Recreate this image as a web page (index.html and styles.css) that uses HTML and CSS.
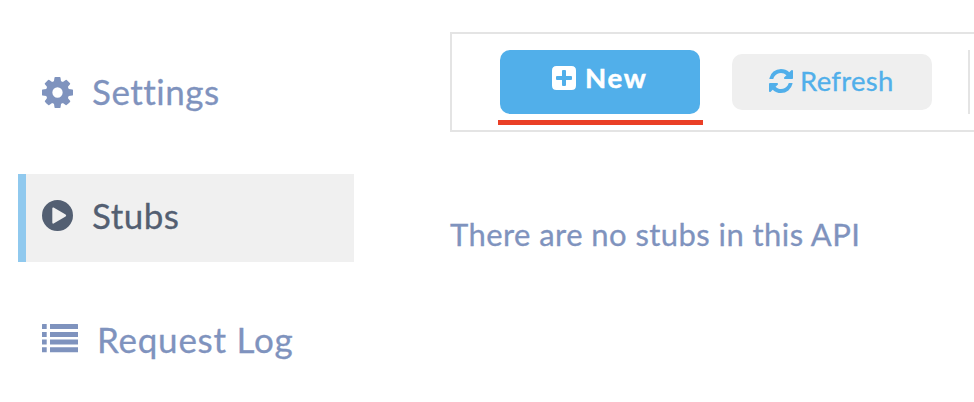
FILE: index.html
```html
<!DOCTYPE html>
<html lang="en">
<head>
<meta charset="utf-8">
<title>Stubs</title>
<link rel="stylesheet" href="styles.css">
</head>
<body>
<div class="layout">
  <nav class="sidebar">
    <a class="item">
      <svg class="icon gear" viewBox="0 128 1536 1536"><path d="M1024 896q0-106-75-181t-181-75-181 75-75 181 75 181 181 75 181-75 75-181zm512-109v222q0 12-8 23t-20 13l-185 28q-19 54-39 91 35 50 107 138 10 12 10 25t-9 23q-27 37-99 108t-94 71q-12 0-26-9l-138-108q-44 23-91 38-16 136-29 186-7 28-36 28h-222q-14 0-24.5-8.5t-11.5-21.5l-28-184q-49-16-90-37l-141 107q-10 9-25 9-14 0-25-11-126-114-165-168-7-10-7-23 0-12 8-23 15-21 51-66.5t54-70.5q-27-50-41-99l-183-27q-13-2-21-12.5t-8-23.5v-222q0-12 8-23t19-13l186-28q14-46 39-92-40-57-107-138-10-12-10-24 0-10 9-23 26-36 98.5-107.5t94.5-71.5q13 0 26 10l138 107q44-23 91-38 16-136 29-186 7-28 36-28h222q14 0 24.5 8.5t11.5 21.5l28 184q49 16 90 37l142-107q9-9 24-9 13 0 25 10 129 119 165 170 7 8 7 22 0 12-8 23-15 21-51 66.5t-54 70.5q26 50 41 98l183 28q13 2 21 12.5t8 23.5z"/></svg>
      <span class="label settings">Settings</span>
    </a>
    <a class="item active">
      <svg class="icon" viewBox="0 0 31 31"><path fill-rule="evenodd" d="M15.5 0a15.5 15.5 0 1 1 0 31a15.5 15.5 0 1 1 0-31zM11.600 7.500q-1.300-.5-1.300 1v14q0 1.500 1.300 1l12-7.100q1.200-.9 0-1.800z"/></svg>
      <span class="label stubs">Stubs</span>
    </a>
    <a class="item">
      <svg class="icon list" viewBox="0 0 36 29"><path d="M.5 0h4.200v5H.5q-.5 0-.5-.5v-4q0-.5.5-.5zM8 0h27.500q.5 0 .5.500v4q0 .5-.5.5H8zM0 8h4.700v5H0zM8 8h28v5H8zM0 15.500h4.700v5H0zM8 15.500h28v5H8zM0 23.300h4.700v4.900H0zM8 23.300h28v4.900H8z"/></svg>
      <span class="label log">Request Log</span>
    </a>
  </nav>
  <main class="content">
    <div class="toolbar">
      <div class="marked">
        <button class="btn primary">
          <svg class="btn-icon" viewBox="0 0 24 24"><path fill-rule="evenodd" d="M4.500 0h15Q24 0 24 4.500v15q0 4.500-4.500 4.500h-15Q0 24 0 19.500v-15Q0 0 4.500 0zM11 4q-1 0-1 1v5H5q-1 0-1 1v2q0 1 1 1h5v5q0 1 1 1h2q1 0 1-1v-5h5q1 0 1-1v-2q0-1-1-1h-5V5q0-1-1-1z"/></svg>
          <span class="new">New</span>
        </button>
      </div>
      <button class="btn secondary">
        <svg class="btn-icon" viewBox="0 128 1536 1536"><path d="M1511 1056q0 5-1 7-64 268-268 434.500t-478 166.500q-146 0-282.500-55t-243.500-157l-129 129q-19 19-45 19t-45-19-19-45v-448q0-26 19-45t45-19h448q26 0 45 19t19 45-19 45l-137 137q71 66 161 102t187 36q134 0 250-65t186-179q11-17 53-117 8-23 30-23h192q13 0 22.500 9.500t9.500 22.500zm25-800v448q0 26-19 45t-45 19h-448q-26 0-45-19t-19-45 19-45l138-138q-148-137-349-137-134 0-250 65t-186 179q-11 17-53 117-8 23-30 23h-199q-13 0-22.500-9.500t-9.500-22.500v-7q65-268 270-434.500t480-166.500q146 0 284 55.500t245 156.500l130-129q19-19 45-19t45 19 19 45z"/></svg>
        <span class="refresh">Refresh</span>
      </button>
      <div class="divider"></div>
    </div>
    <p class="empty">There are no stubs in this API</p>
  </main>
</div>
</body>
</html>
```
FILE: styles.css
```css
* { box-sizing: border-box; }
body {
  margin: 0;
  height: 402px;
  overflow: hidden;
  background: #fff;
  color: #7f93be;
  font-family: Lato, sans-serif;
  font-variant-ligatures: none;
  -webkit-text-stroke: 0.3px currentColor;
}
.layout { display: flex; }
svg { display: block; flex: none; fill: currentColor; }
.sidebar {
  flex: none;
  width: 354px;
  padding: 50px 0 0 18px;
  display: flex;
  flex-direction: column;
  gap: 36px;
}
.item {
  height: 88px;
  display: flex;
  align-items: center;
  padding: 0 0 6px 16px;
  border-left: 8px solid transparent;
}
.item.active {
  background: #f0f0f0;
  border-left-color: #90c9ee;
  color: #535f72;
}
.icon { width: 31px; height: 31px; margin-right: 19px; }
.icon.gear { margin-top: 3px; }
.icon.list { width: 36px; height: 29px; margin-top: -1px; }
.label { font-size: 35px; line-height: 44px; white-space: nowrap; }
.settings { letter-spacing: 0.5px; }
.stubs { letter-spacing: 0.5px; }
.log { letter-spacing: 0.75px; margin-top: -1px; }
.content { flex: none; width: 524px; margin-left: 96px; padding-top: 32px; }
.toolbar {
  display: flex;
  width: 560px;
  height: 100px;
  padding: 16px 0 0 48px;
  border: 2px solid #e4e4e4;
}
.marked { width: 205px; height: 75px; margin-left: -2px; padding-left: 2px; border-bottom: 5px solid #ea3f26; }
.btn {
  display: flex;
  align-items: center;
  justify-content: flex-start;
  border: 0;
  border-radius: 10px;
  width: 200px;
  font: 27.5px/36px Lato, sans-serif;
}
.btn-icon { width: 24px; height: 24px; }
.primary { height: 64px; padding: 0 0 8px 52px; background: #51afea; color: #fff; font-weight: 700; gap: 9px; }
.new { letter-spacing: 1.8px; -webkit-text-stroke: 0.5px currentColor; }
.secondary { height: 56px; margin: 4px 0 0 29px; padding: 0 0 2px 37px; background: #efefef; color: #51afea; gap: 7px; }
.refresh { letter-spacing: 0.3px; }
.divider { width: 2px; height: 64px; margin-left: 36px; background: #e4e4e4; }
.empty { margin: 82px 0 0; font-size: 31px; line-height: 40px; letter-spacing: 0.43px; white-space: nowrap; }
```
